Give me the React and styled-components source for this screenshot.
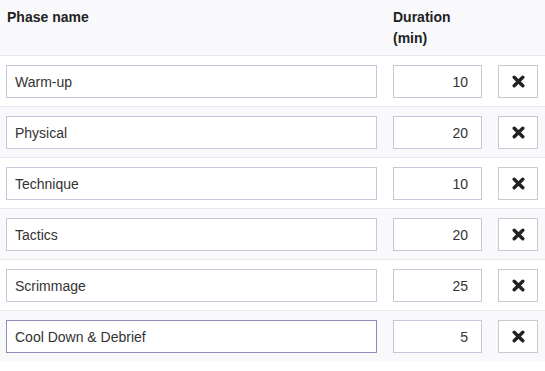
import React, { useState } from "react";
import styled, { createGlobalStyle } from "styled-components";

const GlobalStyle = createGlobalStyle`
  body {
    margin: 0;
    background: #ffffff;
    font-family: "Liberation Sans", Arial, Helvetica, sans-serif;
  }
`;

const phases = [
  { name: "Warm-up", duration: 10 },
  { name: "Physical", duration: 20 },
  { name: "Technique", duration: 10 },
  { name: "Tactics", duration: 20 },
  { name: "Scrimmage", duration: 25 },
  { name: "Cool Down & Debrief", duration: 5, focused: true },
];

const Table = styled.div`
  width: 545px;
  color: #333333;
  font-size: 14px;
`;

const Row = styled.div`
  display: grid;
  grid-template-columns: 1fr 89px 40px;
  column-gap: 16px;
  align-items: start;
  padding: 9px 7px 8px 6px;
  border-top: 1px solid #e8e8ef;
  background: ${(p) => (p.$striped ? "#f9f9fc" : "#ffffff")};
`;

const HeaderRow = styled(Row)`
  padding: 7px 7px 6px 7px;
  border-top: none;
  background: #f9f9fc;
  font-weight: bold;
  line-height: 21px;
  color: #222222;
`;

const HeaderCell = styled.div`
  margin-left: ${(p) => (p.$shift ? "-1px" : "0")};
`;

const TextInput = styled.input`
  box-sizing: border-box;
  width: 100%;
  height: 33px;
  margin: 0;
  padding: 0 8px;
  border: 1px solid ${(p) => (p.$focused ? "#8c90b8" : "#c6c7d8")};
  border-radius: 0;
  background: #ffffff;
  font-family: inherit;
  font-size: 14px;
  color: #333333;
  text-align: ${(p) => (p.$right ? "right" : "left")};
  padding-right: ${(p) => (p.$right ? "13px" : "8px")};
  outline: none;
`;

const RemoveButton = styled.button`
  box-sizing: border-box;
  width: 40px;
  height: 33px;
  margin: 0;
  padding: 0;
  border: 1px solid #c9c9d2;
  border-radius: 0;
  background: #ffffff;
  display: flex;
  align-items: center;
  justify-content: center;
  cursor: pointer;
`;

const CloseIcon = () => (
  <svg width="13" height="13" viewBox="0 0 13 13" aria-hidden="true">
    <path
      d="M2.2 2.2 L10.8 10.8 M10.8 2.2 L2.2 10.8"
      stroke="#222222"
      strokeWidth="3.4"
      strokeLinecap="round"
    />
  </svg>
);

export default function App() {
  const [rows, setRows] = useState(phases);

  const update = (i, key, value) => {
    setRows(rows.map((r, j) => (j === i ? { ...r, [key]: value } : r)));
  };

  return (
    <>
      <GlobalStyle />
      <Table>
        <HeaderRow>
          <HeaderCell>Phase name</HeaderCell>
          <HeaderCell>Duration (min)</HeaderCell>
          <HeaderCell />
        </HeaderRow>
        {rows.map((row, i) => (
          <Row key={i} $striped={i % 2 === 1}>
            <TextInput
              value={row.name}
              $focused={row.focused}
              onChange={(e) => update(i, "name", e.target.value)}
            />
            <TextInput
              $right
              inputMode="numeric"
              value={row.duration}
              onChange={(e) => update(i, "duration", e.target.value)}
            />
            <RemoveButton
              aria-label="Remove phase"
              onClick={() => setRows(rows.filter((_, j) => j !== i))}
            >
              <CloseIcon />
            </RemoveButton>
          </Row>
        ))}
      </Table>
    </>
  );
}
